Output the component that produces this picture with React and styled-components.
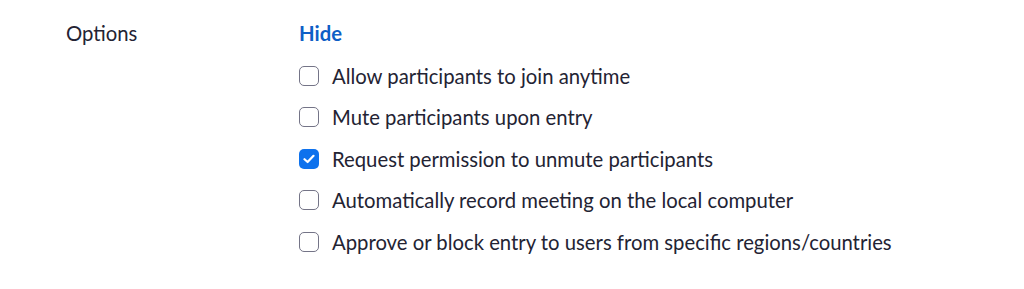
import React, { useState } from 'react'
import styled, { createGlobalStyle } from 'styled-components'

const GlobalStyle = createGlobalStyle`
  body {
    margin: 0;
    background: #ffffff;
    font-family: Lato, "Open Sans", sans-serif;
    color: #232333;
  }
`

const initialOptions = [
  { id: 'join', label: 'Allow participants to join anytime', checked: false },
  { id: 'mute', label: 'Mute participants upon entry', checked: false },
  { id: 'unmute', label: 'Request permission to unmute participants', checked: true },
  { id: 'record', label: 'Automatically record meeting on the local computer', checked: false },
  { id: 'regions', label: 'Approve or block entry to users from specific regions/countries', checked: false },
]

function App() {
  const [options, setOptions] = useState(initialOptions)

  const toggle = (id) => {
    setOptions(options.map(o => (o.id === id ? { ...o, checked: !o.checked } : o)))
  }

  return (
    <>
      <GlobalStyle />
      <Section>
        <Label>Options</Label>
        <Content>
          <HideLink>Hide</HideLink>
          <List>
            {options.map(o => (
              <Row key={o.id} onClick={() => toggle(o.id)}>
                <Box checked={o.checked}>
                  {o.checked && (
                    <svg width="12" height="10" viewBox="0 0 12 10">
                      <path d="M1.5 5.2 L4.6 8 L10.5 1.8" fill="none" stroke="#ffffff" strokeWidth="2.2" strokeLinecap="round" strokeLinejoin="round" />
                    </svg>
                  )}
                </Box>
                <RowText>{o.label}</RowText>
              </Row>
            ))}
          </List>
        </Content>
      </Section>
    </>
  )
}

export default App

const Section = styled.div`
  display: flex;
  padding: 20px 0 0 66px;
  height: 289px;
  box-sizing: border-box;
`

const Label = styled.div`
  width: 233px;
  font-size: 20.3px;
  line-height: 26px;
`

const Content = styled.div`
  display: flex;
  flex-direction: column;
`

const HideLink = styled.div`
  font-size: 20.3px;
  line-height: 26px;
  font-weight: 700;
  color: #0e5fc6;
  cursor: pointer;
`

const List = styled.div`
  display: flex;
  flex-direction: column;
  margin-top: 9px;
`

const Row = styled.div`
  display: flex;
  align-items: center;
  height: 41.5px;
  cursor: pointer;
`

const Box = styled.div`
  width: 20px;
  height: 20px;
  box-sizing: border-box;
  border-radius: 5px;
  border: ${p => (p.checked ? 'none' : '1.5px solid #747487')};
  background: ${p => (p.checked ? '#0e72ed' : '#ffffff')};
  display: flex;
  align-items: center;
  justify-content: center;
  margin-right: 13px;
  flex-shrink: 0;
`

const RowText = styled.div`
  font-size: 20.3px;
  line-height: 26px;
`
